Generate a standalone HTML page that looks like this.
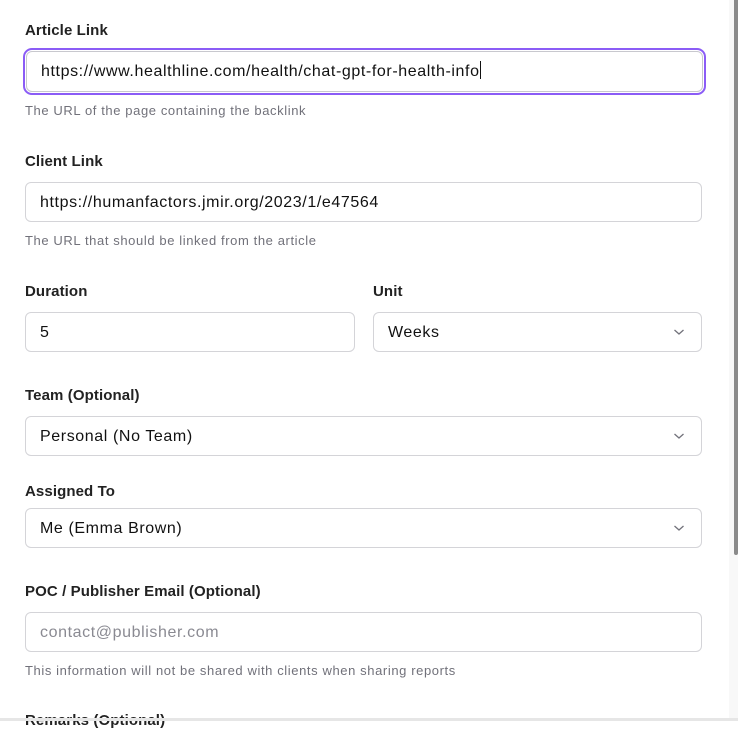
<!DOCTYPE html>
<html><head><style>
*{box-sizing:border-box;margin:0;padding:0}
body{width:738px;height:721px;overflow:hidden;background:#fff;position:relative;font-family:"Liberation Sans",Arial,sans-serif;color:#111}
.l{position:absolute;left:25px;font-size:15px;font-weight:bold;color:#222;line-height:18px;letter-spacing:0.1px;margin-top:2px}
.i{position:absolute;left:25px;width:677px;height:40px;border:1px solid #d4d4d8;border-radius:6px;font-size:16px;letter-spacing:0.6px;line-height:40px;padding-left:14px;color:#111;background:#fff}
.h{position:absolute;left:25px;font-size:13px;letter-spacing:0.6px;color:#71717a;line-height:16px;margin-top:1px}
.c{position:absolute;right:16px;top:14px;width:12px;height:10px}
</style></head><body>
<div class="l" style="top:20px">Article Link</div>
<div style="position:absolute;left:23px;top:48px;width:683px;height:47px;border:2px solid #8b5cf6;border-radius:9px"></div>
<div class="i" style="top:51px;height:41px;border-color:#c8c8ce;width:677px;left:26px">https://www.healthline.com/health/chat-gpt-for-health-info<span style="display:inline-block;width:1px;height:18px;background:#111;vertical-align:-3px"></span></div>
<div class="h" style="top:102px">The URL of the page containing the backlink</div>

<div class="l" style="top:151px">Client Link</div>
<div class="i" style="top:182px">https://humanfactors.jmir.org/2023/1/e47564</div>
<div class="h" style="top:232px">The URL that should be linked from the article</div>

<div class="l" style="top:281px">Duration</div>
<div class="l" style="top:281px;left:373px">Unit</div>
<div class="i" style="top:312px;width:330px">5</div>
<div class="i" style="top:312px;left:373px;width:329px">Weeks<svg class="c" viewBox="0 0 12 10"><path d="M1.5 3L6 7L10.5 3" fill="none" stroke="#71717a" stroke-width="1.3"/></svg></div>

<div class="l" style="top:385px">Team (Optional)</div>
<div class="i" style="top:416px">Personal (No Team)<svg class="c" viewBox="0 0 12 10"><path d="M1.5 3L6 7L10.5 3" fill="none" stroke="#71717a" stroke-width="1.3"/></svg></div>

<div class="l" style="top:481px">Assigned To</div>
<div class="i" style="top:508px">Me (Emma Brown)<svg class="c" viewBox="0 0 12 10"><path d="M1.5 3L6 7L10.5 3" fill="none" stroke="#71717a" stroke-width="1.3"/></svg></div>

<div class="l" style="top:581px">POC / Publisher Email (Optional)</div>
<div class="i" style="top:612px;color:#8a8a92">contact@publisher.com</div>
<div class="h" style="top:662px">This information will not be shared with clients when sharing reports</div>

<div class="l" style="top:710px">Remarks (Optional)</div>

<div style="position:absolute;left:729px;top:0;width:9px;height:721px;background:#f8f8f8"></div>
<div style="position:absolute;left:734px;top:0;width:4px;height:555px;background:#8a8a8a;border-radius:0 0 2px 2px"></div>
<div style="position:absolute;left:0;top:718px;width:738px;height:3px;background:#e6e6e6"></div>
</body></html>
